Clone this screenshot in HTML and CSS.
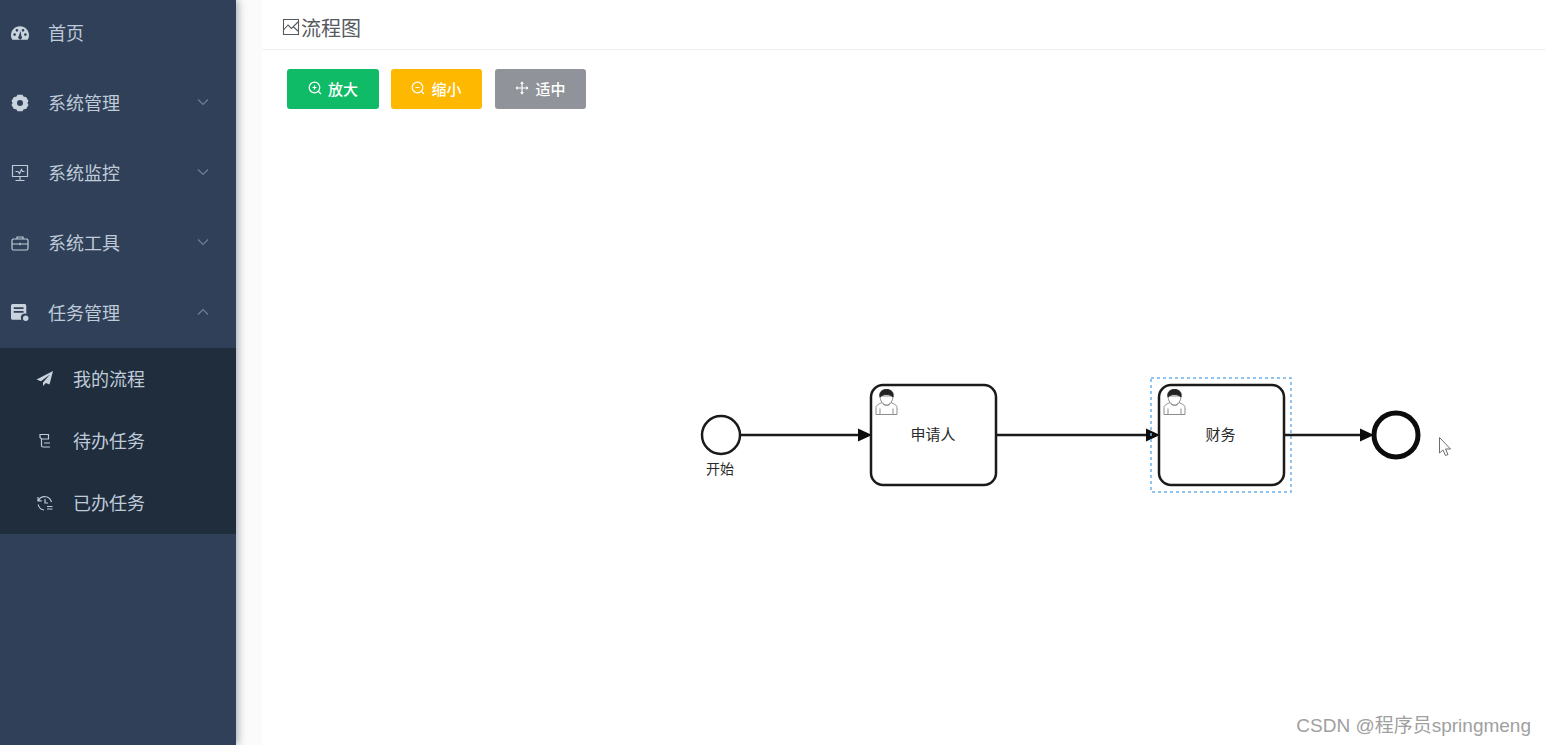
FILE: index.html
```html
<!DOCTYPE html>
<html lang="zh-CN">
<head>
    <meta charset="UTF-8">
    <title>流程图</title>
    <link rel="stylesheet" href="styles.css">
</head>
<body>
    <div class="app">
        <aside class="sidebar">
            <ul class="menu">
                <li class="menu-item">
                    <svg class="menu-icon" viewBox="1 1 16 16"><path fill="currentColor" fill-rule="evenodd" d="M9 3C4.3 3 1 6.6 1 11c0 1.5.5 2.800 1.200 4h13.600c.7-1.200 1.200-2.500 1.200-4 0-4.400-3.300-8-8-8zM4.200 9.200a1.200 1.200 0 1 1 0 2.400 1.200 1.200 0 0 1 0-2.400zM6.300 5.400a1.200 1.200 0 1 1 0 2.400 1.200 1.200 0 0 1 0-2.400zM11.700 5.400a1.200 1.200 0 1 1 0 2.400 1.200 1.200 0 0 1 0-2.400zM13.800 9.200a1.200 1.200 0 1 1 0 2.400 1.200 1.200 0 0 1 0-2.400zM9.600 7l.6 4.600a1.700 1.700 0 1 1-2.300.1z"/></svg>
                    <span>首页</span>
                </li>
                <li class="menu-item">
                    <svg class="menu-icon" viewBox="0 0 18 18"><path fill="currentColor" fill-rule="evenodd" d="M6.500.8h5l1.200 2 2.400.1 2.400 4.100-1.100 2 1.100 2-2.400 4.100-2.400.1-1.200 2h-5l-1.200-2-2.400-.1L.5 11l1.100-2-1.100-2 2.400-4.100 2.400-.1zM9 6a3 3 0 1 0 0 6 3 3 0 0 0 0-6z"/></svg>
                    <span>系统管理</span>
                    <svg class="arrow" viewBox="0 0 12 8"><path d="M1 1.500l5 5 5-5"/></svg>
                </li>
                <li class="menu-item">
                    <svg class="menu-icon line" viewBox="0 0 18 18"><path d="M1.500 1.500h15v11h-15zM9 12.500v3.500M4.500 16.500h9M4.500 7.500h2.500l1.500 2 2-4 1 2h2"/></svg>
                    <span>系统监控</span>
                    <svg class="arrow" viewBox="0 0 12 8"><path d="M1 1.500l5 5 5-5"/></svg>
                </li>
                <li class="menu-item">
                    <svg class="menu-icon line" viewBox="0 0 18 18"><path d="M2.500 5h13a1.500 1.500 0 0 1 1.500 1.500v8a1.500 1.500 0 0 1-1.500 1.500h-13A1.500 1.500 0 0 1 1 14.500v-8A1.500 1.500 0 0 1 2.500 5zM6 5V3h6v2M1 10h16M9 8.800v2.400"/></svg>
                    <span>系统工具</span>
                    <svg class="arrow" viewBox="0 0 12 8"><path d="M1 1.500l5 5 5-5"/></svg>
                </li>
                <li class="menu-item">
                    <svg class="menu-icon" viewBox="1 1 16.500 16.500"><path fill="currentColor" fill-rule="evenodd" d="M2.500 1h11A1.500 1.500 0 0 1 15 2.500V10a3.700 3.700 0 0 0-4.500 5.500h-8A1.500 1.500 0 0 1 1 14V2.500A1.500 1.500 0 0 1 2.500 1zM3.500 4v1.500h9V4zM3.500 7.500V9h9V7.500z"/><circle cx="14.500" cy="14" r="2.500" fill="currentColor"/></svg>
                    <span>任务管理</span>
                    <svg class="arrow" viewBox="0 0 12 8"><path d="M1 6.500l5-5 5 5"/></svg>
                </li>
            </ul>
            <ul class="submenu">
                <li class="submenu-item">
                    <svg class="menu-icon" viewBox="0 0 18 18"><path fill="currentColor" d="M17 1L.5 9.500l4.500 1.800L14 4.500 7 12.500V16l2.800-3 3.700 1.500z"/></svg>
                    <span>我的流程</span>
                </li>
                <li class="submenu-item">
                    <svg class="menu-icon line" viewBox="0 0 18 18"><path d="M4 2.500h8.500v4.500H5.500L4 5.500zM5.500 7v6.500a1.500 1.500 0 0 0 1.500 1.500h7M8 11h6"/></svg>
                    <span>待办任务</span>
                </li>
                <li class="submenu-item">
                    <svg class="menu-icon line" viewBox="0 0 18 18"><path d="M2.500 6.500A7 7 0 0 1 15.500 8M2 3v3.800h3.800M9 5v4h3M2.200 10.500A7 7 0 0 0 8 16M11 12.500h5.500M11 15h5.500"/></svg>
                    <span>已办任务</span>
                </li>
            </ul>
        </aside>

        <main class="content">
            <header class="title-bar">
                <svg class="title-icon" viewBox="0 0 18 18"><path d="M1.500 1.500h15v15h-15zM1.500 12l4.500-5 3.500 3.500 7-7M11 8.500l5.500 5"/></svg>
                <span>流程图</span>
            </header>
            <div class="toolbar">
                <button class="btn btn-green">
                    <svg viewBox="0 0 14 14"><circle cx="6.500" cy="6.500" r="5.300"/><path d="M4.500 6.500h4M6.500 4.500v4M10.500 10.500l2.500 2.500"/></svg>
                    放大
                </button>
                <button class="btn btn-yellow">
                    <svg viewBox="0 0 14 14"><circle cx="6.500" cy="6.500" r="5.300"/><path d="M4.500 6.500h4M10.500 10.500l2.500 2.500"/></svg>
                    缩小
                </button>
                <button class="btn btn-grey">
                    <svg viewBox="0 0 14 14"><path d="M7 1v12M1 7h12"/><path class="solid" d="M7 .5l2 2.200H5zM7 13.500l2-2.200H5zM.5 7l2.200-2v4zM13.500 7l-2.200-2v4z"/></svg>
                    适中
                </button>
            </div>
            <div class="canvas">
                <svg class="diagram" viewBox="262 121 1284 624">
                    <defs>
                        <g id="user-icon" class="user">
                            <path d="M1 25.500v-7c0-2.500 3-3.500 6-5 1 2 2.500 3 4.500 3s3.500-1 4.500-3c3 1.500 6 2.500 6 5v7zM5 25.500v-6M18 25.500v-6"/>
                            <path d="M5 7c0 5 3 9 6.500 9s6.500-4 6.500-9z"/>
                            <path class="hair" d="M5 8c-1-5 2-7.500 6.500-7.500S19 3 18 8c-2-2-4-2.500-6.500-2.500S7 6 5 8z"/>
                        </g>
                    </defs>

                    <circle class="shape" cx="721" cy="435" r="19"/>
                    <text class="label" x="720" y="474">开始</text>
                    <path class="flow" d="M740 435H860"/>
                    <path class="head" d="M858 428.500l14 6.500-14 6.500z"/>

                    <rect class="shape" x="871" y="385" width="125" height="100" rx="12"/>
                    <use href="#user-icon" x="875" y="389"/>
                    <text class="label task-label" x="933" y="440">申请人</text>
                    <path class="flow" d="M996 435H1148"/>
                    <path class="head" d="M1146 428.500l14 6.500-14 6.500z"/>

                    <rect class="shape" x="1159" y="385" width="125" height="100" rx="12"/>
                    <use href="#user-icon" x="1163" y="389"/>
                    <text class="label task-label" x="1220.500" y="440">财务</text>
                    <rect class="selected" x="1151" y="378" width="140" height="114"/>
                    <path class="flow" d="M1284 435H1362"/>
                    <path class="head" d="M1360 428.500l14 6.500-14 6.500z"/>

                    <circle class="end" cx="1396" cy="435" r="22"/>
                    <path class="cursor" d="M1439.500 437.500v15.500l3.500-3 2.500 5.500 2.500-1-2.500-5.500h5z"/>
                </svg>
            </div>
            <div class="watermark">CSDN @程序员springmeng</div>
        </main>
    </div>
</body>
</html>
```

FILE: styles.css
```css
* {
    box-sizing: border-box;
}

html, body {
    height: 100%;
    margin: 0;
    overflow: hidden;
}

body {
    font-family: "Noto Sans CJK SC", "Liberation Sans", sans-serif;
    background-color: #fbfbfc;
}

ul {
    list-style: none;
    margin: 0;
    padding: 0;
}

.app {
    display: flex;
    height: 100%;
    gap: 26px;
}

/* sidebar */
.sidebar {
    width: 236px;
    flex-shrink: 0;
    background-color: #304058;
    box-shadow: 2px 0 8px rgba(0, 21, 41, 0.35);
    color: #bfcbd9;
    overflow: hidden;
}

.menu {
    margin-top: -2px;
}

.menu-item,
.submenu-item {
    display: flex;
    align-items: center;
    padding-bottom: 2px;
    font-size: 18px;
    white-space: nowrap;
}

.menu-item {
    height: 70px;
    padding-left: 11px;
}

.menu-item .menu-icon {
    margin-right: 19px;
}

.submenu {
    background-color: #1f2d3d;
}

.submenu-item {
    height: 62px;
    padding-left: 36px;
}

.submenu-item .menu-icon {
    margin-right: 19px;
}

.menu-icon {
    width: 18px;
    height: 18px;
    margin-top: 2px;
    flex-shrink: 0;
    color: #c9d3de;
}

.menu-icon.line {
    fill: none;
    stroke: #bfcbd9;
    stroke-width: 1.2;
}

.arrow {
    width: 12px;
    height: 8px;
    margin-left: auto;
    margin-right: 27px;
    fill: none;
    stroke: #6f7f92;
    stroke-width: 1.2;
}

/* main area */
.content {
    flex: 1;
    display: flex;
    flex-direction: column;
    position: relative;
    background-color: #fff;
    min-width: 0;
}

.title-bar {
    display: flex;
    align-items: center;
    height: 50px;
    padding: 5px 0 0 20px;
    border-bottom: 1px solid #f0f0f0;
    font-size: 20px;
    color: #555a60;
}

.title-icon {
    width: 18px;
    height: 18px;
    margin-right: 1px;
    fill: none;
    stroke: #555a60;
    stroke-width: 1.1;
}

.toolbar {
    display: flex;
    gap: 12px;
    padding: 19px 0 0 25px;
}

.btn {
    display: flex;
    align-items: center;
    justify-content: center;
    gap: 6px;
    height: 40px;
    width: 92px;
    border: 0;
    border-radius: 3px;
    padding: 0 0 2px;
    font-family: inherit;
    font-size: 15px;
    font-weight: 500;
    color: #fff;
}

.btn svg {
    width: 14px;
    height: 14px;
    fill: none;
    stroke: #fff;
    stroke-width: 1.2;
}

.btn .solid {
    fill: #fff;
    stroke: none;
}

.btn-green {
    background-color: #10bb68;
}

.btn-yellow {
    width: 91px;
    background-color: #ffb800;
}

.btn-grey {
    width: 91px;
    margin-left: 1px;
    background-color: #909399;
}

.canvas {
    flex: 1;
    margin-top: 12px;
    min-height: 0;
}

.diagram {
    display: block;
    width: 100%;
    height: 100%;
}

.shape {
    fill: #fff;
    stroke: #1a1a1a;
    stroke-width: 2.5;
}

.end {
    fill: #fff;
    stroke: #0c0c0c;
    stroke-width: 5;
}

.flow {
    fill: none;
    stroke: #1a1a1a;
    stroke-width: 2.5;
}

.head {
    fill: #0c0c0c;
}

.selected {
    fill: none;
    stroke: #6fb1ec;
    stroke-width: 1.5;
    stroke-dasharray: 3 3;
}

.label {
    font-size: 14px;
    fill: #2b2b2b;
    text-anchor: middle;
}

.task-label {
    font-size: 15px;
}

.user {
    fill: #fff;
    stroke: #8c8c8c;
    stroke-width: 1;
}

.user .hair {
    fill: #222;
    stroke: #222;
}

.cursor {
    fill: #fff;
    stroke: #6c6c6c;
    stroke-width: 1;
}

.watermark {
    position: absolute;
    right: 15px;
    bottom: 8px;
    font-family: "Liberation Sans", "Noto Sans CJK SC", sans-serif;
    font-size: 19px;
    color: #a0a0a0;
    white-space: nowrap;
}
```
